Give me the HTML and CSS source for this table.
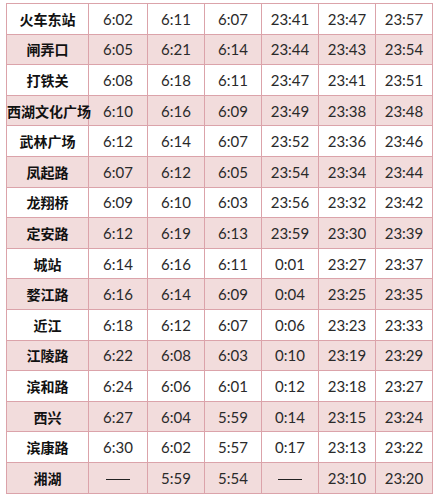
FILE: index.html
```html
<!DOCTYPE html>
<html lang="zh">
<head>
<meta charset="utf-8">
<title>时刻表</title>
<link rel="stylesheet" href="styles.css">
</head>
<body>
<div class="sheet">
<table class="timetable">
<colgroup><col class="c-name"><col class="c-t1"><col class="c-t"><col class="c-t"><col class="c-t"><col class="c-t"><col class="c-t"></colgroup>
<tbody>
<tr><th>火车东站</th><td>6:02</td><td>6:11</td><td>6:07</td><td>23:41</td><td>23:47</td><td>23:57</td></tr>
<tr class="alt"><th>闸弄口</th><td>6:05</td><td>6:21</td><td>6:14</td><td>23:44</td><td>23:43</td><td>23:54</td></tr>
<tr><th>打铁关</th><td>6:08</td><td>6:18</td><td>6:11</td><td>23:47</td><td>23:41</td><td>23:51</td></tr>
<tr class="alt"><th>西湖文化广场</th><td>6:10</td><td>6:16</td><td>6:09</td><td>23:49</td><td>23:38</td><td>23:48</td></tr>
<tr><th>武林广场</th><td>6:12</td><td>6:14</td><td>6:07</td><td>23:52</td><td>23:36</td><td>23:46</td></tr>
<tr class="alt"><th>凤起路</th><td>6:07</td><td>6:12</td><td>6:05</td><td>23:54</td><td>23:34</td><td>23:44</td></tr>
<tr><th>龙翔桥</th><td>6:09</td><td>6:10</td><td>6:03</td><td>23:56</td><td>23:32</td><td>23:42</td></tr>
<tr class="alt"><th>定安路</th><td>6:12</td><td>6:19</td><td>6:13</td><td>23:59</td><td>23:30</td><td>23:39</td></tr>
<tr><th>城站</th><td>6:14</td><td>6:16</td><td>6:11</td><td>0:01</td><td>23:27</td><td>23:37</td></tr>
<tr class="alt"><th>婺江路</th><td>6:16</td><td>6:14</td><td>6:09</td><td>0:04</td><td>23:25</td><td>23:35</td></tr>
<tr><th>近江</th><td>6:18</td><td>6:12</td><td>6:07</td><td>0:06</td><td>23:23</td><td>23:33</td></tr>
<tr class="alt"><th>江陵路</th><td>6:22</td><td>6:08</td><td>6:03</td><td>0:10</td><td>23:19</td><td>23:29</td></tr>
<tr><th>滨和路</th><td>6:24</td><td>6:06</td><td>6:01</td><td>0:12</td><td>23:18</td><td>23:27</td></tr>
<tr class="alt"><th>西兴</th><td>6:27</td><td>6:04</td><td>5:59</td><td>0:14</td><td>23:15</td><td>23:24</td></tr>
<tr><th>滨康路</th><td>6:30</td><td>6:02</td><td>5:57</td><td>0:17</td><td>23:13</td><td>23:22</td></tr>
<tr class="alt"><th>湘湖</th><td><span class="dash"></span></td><td>5:59</td><td>5:54</td><td><span class="dash"></span></td><td>23:10</td><td>23:20</td></tr>
</tbody>
</table>
</div>
</body>
</html>
```
FILE: styles.css
```css
html, body {
  margin: 0;
  padding: 0;
  background: #ffffff;
}
.sheet {
  padding: 3px 0 0 6px;
}
.timetable {
  border-collapse: collapse;
  table-layout: fixed;
  width: 427px;
  font-family: "Lato", "Open Sans", "Liberation Sans", "Noto Sans CJK SC", sans-serif;
  color: #2a2a2a;
}
.c-name { width: 82px; }
.c-t1 { width: 59px; }
.c-t { width: 57px; }
.timetable th,
.timetable td {
  border: 1px solid #dba3aa;
  height: 30.6px;
  padding: 0;
  text-align: center;
  vertical-align: middle;
  box-sizing: border-box;
}
.timetable td {
  font-size: 15px;
  font-weight: 400;
}
.timetable th {
  font-family: "Noto Sans CJK SC", sans-serif;
  font-size: 14px;
  font-weight: 700;
  color: #111;
  white-space: nowrap;
}
.timetable tr.alt th,
.timetable tr.alt td {
  background: #f2dcdc;
}
.dash {
  display: inline-block;
  width: 24px;
  height: 1px;
  background: #222;
  vertical-align: middle;
}
```
